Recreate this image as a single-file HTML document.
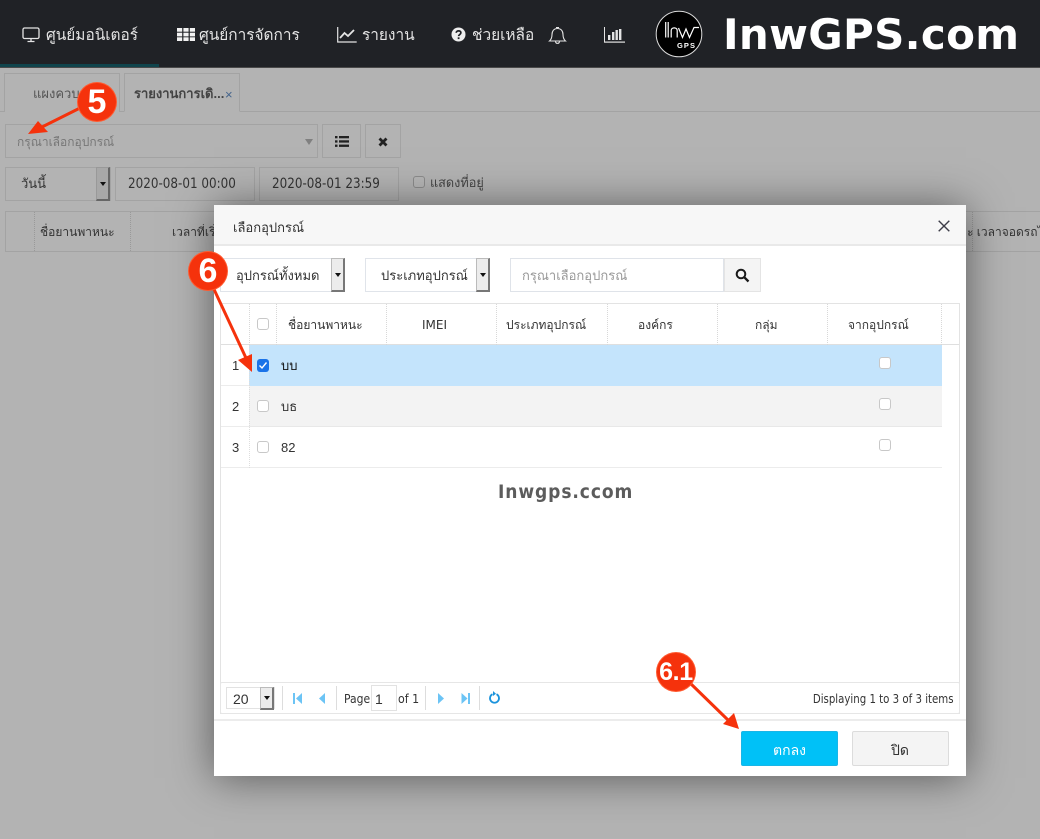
<!DOCTYPE html>
<html><head><meta charset="utf-8">
<style>
*{box-sizing:border-box}
html,body{margin:0;padding:0;width:1040px;height:839px;overflow:hidden;background:#b3b3b3;font-family:"Liberation Sans","Noto Sans CJK SC",sans-serif;font-size:12px;color:#333}
.a{position:absolute}
.t{position:absolute;white-space:nowrap;line-height:16px}
.nav{color:#e4e4e4;font-size:15.4px;top:28px}
.bx{position:absolute;border:1px solid #a3a3a3;background:#b3b3b3}
.cb{position:absolute;width:12px;height:12px;border:1px solid #c8c8c8;border-radius:3px;background:#fff}
.dv{position:absolute;top:304px;height:41px;border-left:1px dotted #d8d8d8}
.dd{position:absolute;width:14px;background:#ececec;border:1px solid #bbb;border-right:2px solid #777;border-bottom:2px solid #777}
.dd:after{content:"";position:absolute;left:3px;top:14px;border:3px solid transparent;border-top:4px solid #111}
.dd.s:after{top:8px}
.sep{position:absolute;top:686px;height:24px;border-left:1px solid #ddd}
.circ{position:absolute;border-radius:50%;background:#f5320c;color:#fff;font-weight:bold;text-align:center;box-shadow:0 0 0 1px #ff5a30}
</style></head><body>

<!-- nav -->
<div class="a" style="left:0;top:0;width:1040px;height:68px;background:#202226;border-bottom:1px solid #4a4a4a"></div>
<div class="a" style="left:0;top:64px;width:159px;height:3px;background:#10444c"></div>
<svg class="a" style="left:22px;top:27px" width="18" height="16" viewBox="0 0 18 16" fill="none" stroke="#e4e4e4" stroke-width="1.3"><rect x="1" y="1" width="16" height="10.5" rx="1.5"/><path d="M9 12v2.5M5.5 14.500h7"/></svg>
<div class="t nav" style="left:46px">ศูนย์มอนิเตอร์</div>
<svg class="a" style="left:177px;top:28px" width="18" height="13" viewBox="0 0 18 13" fill="#f2f2f2"><rect width="5.200" height="3.700"/><rect x="6.400" width="5.200" height="3.700"/><rect x="12.800" width="5.200" height="3.700"/><rect y="4.700" width="5.200" height="3.700"/><rect x="6.400" y="4.700" width="5.200" height="3.700"/><rect x="12.800" y="4.700" width="5.200" height="3.700"/><rect y="9.300" width="5.200" height="3.700"/><rect x="6.400" y="9.300" width="5.200" height="3.700"/><rect x="12.800" y="9.300" width="5.200" height="3.700"/></svg>
<div class="t nav" style="left:199px">ศูนย์การจัดการ</div>
<svg class="a" style="left:337px;top:27px" width="20" height="16" viewBox="0 0 20 16" fill="none" stroke="#e4e4e4"><path d="M.7 0v15h19" stroke-width="1.2"/><path d="M3 11l4.500-5 3.500 3 6-6" stroke-width="1.800"/></svg>
<div class="t nav" style="left:362px">รายงาน</div>
<svg class="a" style="left:451px;top:27px" width="15" height="15" viewBox="0 0 15 15"><circle cx="7.500" cy="7.500" r="7" fill="#eee"/><path d="M5.200 5.800c.2-2.600 4.700-2.600 4.700 0 0 1.700-2.300 1.700-2.300 3.300" fill="none" stroke="#202226" stroke-width="1.700"/><rect x="6.700" y="10.300" width="1.800" height="1.800" fill="#202226"/></svg>
<div class="t nav" style="left:472px">ช่วยเหลือ</div>
<svg class="a" style="left:548px;top:26px" width="19" height="19" viewBox="0 0 19 19" fill="none" stroke="#e4e4e4" stroke-width="1.100"><path d="M1.500 15c2-1.800 2.500-3.500 2.500-6.500C4 5 6 2.500 9.500 2.500S15 5 15 8.500c0 3 .5 4.700 2.500 6.500z"/><path d="M8 1.500h3M7.500 15.500c.3 2.500 3.700 2.500 4 0"/></svg>
<svg class="a" style="left:604px;top:27px" width="21" height="16" viewBox="0 0 21 16" fill="#e4e4e4"><rect x="0" y="0" width="1" height="15"/><rect x="0" y="14.500" width="21" height="1.200"/><rect x="4" y="8" width="2.400" height="5"/><rect x="8" y="5" width="2.400" height="8"/><rect x="11.500" y="3" width="2.400" height="10"/><rect x="15" y="2" width="2.400" height="11"/></svg>

<!-- logo -->
<svg class="a" style="left:655px;top:10px" width="48" height="48" viewBox="0 0 48 48">
<circle cx="24" cy="24" r="22.800" fill="#000" stroke="#ddd" stroke-width="1"/>
<path d="M10.700 12v15.500M13.200 12v15.500M16.200 27.500V20.500c0-3.500 6-3.500 6 0v7" fill="none" stroke="#fff" stroke-width="1.200"/>
<path d="M23.500 18l4 9.500 3.500-8.500 3.500 8.500 4.500-10h5" fill="none" stroke="#fff" stroke-width="1.200"/>
<text x="22" y="38" font-family="Liberation Sans" font-size="7.500" font-weight="bold" fill="#fff" textLength="18">GPS</text>
</svg>
<div class="t" style="left:723px;top:11px;font-size:42px;line-height:48px;font-weight:bold;color:#fff;letter-spacing:.3px;font-family:'DejaVu Sans',sans-serif">InwGPS.com</div>

<!-- tabs -->
<div class="a" style="left:0;top:111px;width:1040px;height:1px;background:#a3a3a3"></div>
<div class="bx" style="left:4px;top:73px;width:116px;height:39px;border-bottom:none"></div>
<div class="bx" style="left:124px;top:73px;width:116px;height:39px;border-bottom:1px solid #b3b3b3"></div>
<div class="t" style="left:33px;top:86px;color:#555;font-size:13px">แผงควบคุม</div>
<div class="t" style="left:134px;top:86px;color:#444;font-weight:bold;font-size:13px">รายงานการเดิ...</div>
<div class="t" style="left:225px;top:87px;color:#44648c;font-size:13px">×</div>

<!-- toolbar -->
<div class="bx" style="left:5px;top:124px;width:313px;height:34px"></div>
<div class="t" style="left:17px;top:134px;color:#777">กรุณาเลือกอุปกรณ์</div>
<div class="a" style="left:305px;top:139px;border:4px solid transparent;border-top:6px solid #808080"></div>
<div class="bx" style="left:322px;top:124px;width:39px;height:34px"></div>
<svg class="a" style="left:335px;top:136px" width="14" height="11" viewBox="0 0 14 11" fill="#222"><rect width="2.500" height="2.300"/><rect x="4" width="10" height="2.300"/><rect y="4.300" width="2.500" height="2.300"/><rect x="4" y="4.300" width="10" height="2.300"/><rect y="8.600" width="2.500" height="2.300"/><rect x="4" y="8.600" width="10" height="2.300"/></svg>
<div class="bx" style="left:365px;top:124px;width:36px;height:34px"></div>
<svg class="a" style="left:378px;top:137px" width="10" height="10" viewBox="0 0 10 10"><path d="M1.500 1.500l7 7M8.500 1.500l-7 7" stroke="#222" stroke-width="2.800"/></svg>

<div class="bx" style="left:5px;top:167px;width:106px;height:34px"></div>
<div class="t" style="left:21px;top:176px;color:#333;font-size:13px">วันนี้</div>
<div class="dd" style="left:96px;top:167px;height:34px;background:#a8a8a8;border-color:#999 #666 #666 #999"></div>
<div class="bx" style="left:115px;top:167px;width:140px;height:34px"></div>
<div class="t" style="left:128px;top:176px;font-size:14px;color:#333;font-family:'DejaVu Sans',sans-serif;transform-origin:0 0;transform:scaleX(.855)">2020-08-01 00:00</div>
<div class="bx" style="left:259px;top:167px;width:140px;height:34px"></div>
<div class="t" style="left:272px;top:176px;font-size:14px;color:#333;font-family:'DejaVu Sans',sans-serif;transform-origin:0 0;transform:scaleX(.855)">2020-08-01 23:59</div>
<div class="a" style="left:413px;top:176px;width:12px;height:12px;border:1px solid #8c8c8c;border-radius:3px;background:#b6b6b6"></div>
<div class="t" style="left:430px;top:175px;color:#444;font-size:12.700px">แสดงที่อยู่</div>

<!-- bg table header -->
<div class="a" style="left:5px;top:211px;width:1035px;height:41px;border:1px solid #a3a3a3;border-right:none"></div>
<div class="a" style="left:34px;top:212px;height:39px;border-left:1px dotted #999"></div>
<div class="a" style="left:130px;top:212px;height:39px;border-left:1px dotted #999"></div>
<div class="t" style="left:40px;top:224px;color:#333">ชื่อยานพาหนะ</div>
<div class="t" style="left:172px;top:224px;width:42px;overflow:hidden;color:#333">เวลาที่เริ่ม</div>
<div class="a" style="left:972px;top:212px;height:39px;border-left:1px dotted #999"></div>
<div class="t" style="left:967px;top:224px;width:73px;overflow:hidden;color:#333">ะ เวลาจอดรถไ</div>

<!-- modal -->
<div class="a" style="left:214px;top:205px;width:752px;height:571px;background:#fff;box-shadow:0 2px 40px rgba(0,0,0,.5)"></div>
<div class="a" style="left:214px;top:205px;width:752px;height:41px;background:#f7f7f7;border-bottom:2px solid #e9e9e9"></div>
<div class="t" style="left:233px;top:220px;font-size:13px;color:#333">เลือกอุปกรณ์</div>
<svg class="a" style="left:938px;top:220px" width="12" height="12" viewBox="0 0 12 12"><path d="M.7.7l10.600 10.600M11.300.7L.7 11.300" stroke="#3d3d48" stroke-width="1.400"/></svg>

<div class="a" style="left:220px;top:258px;width:125px;height:34px;border:1px solid #e0e4ea;background:#fff"></div>
<div class="t" style="left:236px;top:268px;font-size:13px;color:#333">อุปกรณ์ทั้งหมด</div>
<div class="dd" style="left:331px;top:258px;height:34px"></div>
<div class="a" style="left:365px;top:258px;width:125px;height:34px;border:1px solid #e0e4ea;background:#fff"></div>
<div class="t" style="left:381px;top:268px;font-size:13px;color:#333">ประเภทอุปกรณ์</div>
<div class="dd" style="left:476px;top:258px;height:34px"></div>
<div class="a" style="left:510px;top:258px;width:214px;height:34px;border:1px solid #dfe3e9;background:#fff"></div>
<div class="t" style="left:522px;top:268px;font-size:13px;color:#999">กรุณาเลือกอุปกรณ์</div>
<div class="a" style="left:724px;top:258px;width:37px;height:34px;border:1px solid #e4e4e4;background:#f4f4f4"></div>
<svg class="a" style="left:735px;top:268px" width="15" height="15" viewBox="0 0 15 15" fill="none" stroke="#1a1a1a" stroke-width="2"><circle cx="6" cy="6" r="4.300"/><path d="M9.200 9.200l4.300 4.300" stroke-width="2.300"/></svg>

<!-- grid -->
<div class="a" style="left:220px;top:303px;width:740px;height:411px;border:1px solid #e3e3e3"></div>
<div class="a" style="left:221px;top:344px;width:738px;height:1px;background:#dfdfdf"></div>
<div class="dv" style="left:249px"></div><div class="dv" style="left:276px"></div><div class="dv" style="left:386px"></div><div class="dv" style="left:496px"></div><div class="dv" style="left:607px"></div><div class="dv" style="left:717px"></div><div class="dv" style="left:827px"></div><div class="dv" style="left:941px"></div>
<div class="cb" style="left:257px;top:318px"></div>
<div class="t" style="left:288px;top:317px;color:#333">ชื่อยานพาหนะ</div>
<div class="t" style="left:422px;top:317px;color:#333;font-family:'DejaVu Sans',sans-serif;font-size:12px">IMEI</div>
<div class="t" style="left:506px;top:317px;color:#333">ประเภทอุปกรณ์</div>
<div class="t" style="left:638px;top:317px;color:#333">องค์กร</div>
<div class="t" style="left:755px;top:317px;color:#333">กลุ่ม</div>
<div class="t" style="left:848px;top:317px;color:#333">จากอุปกรณ์</div>

<div class="a" style="left:249px;top:345px;width:693px;height:41px;background:#c4e4fc"></div>
<div class="a" style="left:249px;top:386px;width:693px;height:41px;background:#f3f3f3;border-bottom:1px solid #e8e8e8"></div>
<div class="a" style="left:221px;top:467px;width:721px;height:1px;background:#ececec"></div>
<div class="a" style="left:249px;top:345px;height:123px;border-left:1px dotted #ddd"></div>
<div class="a" style="left:221px;top:385px;width:28px;height:1px;background:#ececec"></div>
<div class="a" style="left:221px;top:426px;width:28px;height:1px;background:#ececec"></div>

<div class="t" style="left:232px;top:358px;font-size:13px">1</div>
<div class="t" style="left:232px;top:399px;font-size:13px">2</div>
<div class="t" style="left:232px;top:440px;font-size:13px">3</div>
<div class="a" style="left:257px;top:359px;width:12px;height:13px;background:#1a73e8;border-radius:3px"></div>
<svg class="a" style="left:258px;top:361px" width="10" height="9" viewBox="0 0 10 9"><path d="M1.500 4.500l2.500 2.500 4.500-5.500" fill="none" stroke="#fff" stroke-width="1.400"/></svg>
<div class="cb" style="left:257px;top:400px"></div>
<div class="cb" style="left:257px;top:441px"></div>
<div class="t" style="left:281px;top:358px;color:#111;font-size:13px">บบ</div>
<div class="t" style="left:281px;top:399px;color:#333;font-size:13px">บธ</div>
<div class="t" style="left:281px;top:440px;color:#333;font-size:13px">82</div>
<div class="cb" style="left:879px;top:357px"></div>
<div class="cb" style="left:879px;top:398px"></div>
<div class="cb" style="left:879px;top:439px"></div>

<div class="t" style="left:498px;top:481px;font-size:19px;line-height:22px;font-weight:bold;color:#5c5c5c;letter-spacing:1px;font-family:'DejaVu Sans',sans-serif;transform-origin:0 0;transform:scaleX(.9)">Inwgps.ccom</div>

<!-- pager -->
<div class="a" style="left:220px;top:682px;width:740px;height:32px;border:1px solid #e6e6e6;background:#fff;border-radius:2px"></div>
<div class="a" style="left:226px;top:687px;width:49px;height:22px;border:1px solid #e2e2e2;background:#fff"></div>
<div class="t" style="left:233px;top:691px;font-size:14px">20</div>
<div class="dd s" style="left:260px;top:687px;height:23px"></div>
<div class="sep" style="left:282px"></div><div class="sep" style="left:336px"></div><div class="sep" style="left:425px"></div><div class="sep" style="left:479px"></div>
<svg class="a" style="left:292px;top:692px" width="12" height="13" viewBox="0 0 12 13" fill="#6cc4f5"><rect x="1" y="1" width="2" height="11"/><path d="M10 1v11L4 6.500z"/></svg>
<svg class="a" style="left:317px;top:692px" width="10" height="13" viewBox="0 0 10 13" fill="#6cc4f5"><path d="M8 1v11L2 6.500z"/></svg>
<div class="t" style="left:344px;top:691px;font-size:12px;color:#333;font-family:'DejaVu Sans',sans-serif;transform-origin:0 0;transform:scaleX(.9)">Page</div>
<div class="a" style="left:371px;top:685px;width:26px;height:26px;border:1px solid #e2e2e2;background:#fff"></div>
<div class="t" style="left:375px;top:691px;font-size:14px">1</div>
<div class="t" style="left:398px;top:691px;font-size:12px;color:#333;font-family:'DejaVu Sans',sans-serif;transform-origin:0 0;transform:scaleX(.92)">of 1</div>
<svg class="a" style="left:436px;top:692px" width="10" height="13" viewBox="0 0 10 13" fill="#6cc4f5"><path d="M2 1v11l6-5.500z"/></svg>
<svg class="a" style="left:460px;top:692px" width="12" height="13" viewBox="0 0 12 13" fill="#6cc4f5"><path d="M1.500 1v11l6-5.500z"/><rect x="8" y="1" width="2" height="11"/></svg>
<svg class="a" style="left:488px;top:691px" width="13" height="14" viewBox="0 0 13 14" fill="none"><path d="M8.500 3.200a4.500 4.500 0 1 1-4 0" stroke="#1b93dc" stroke-width="1.800"/><path d="M5 0v5l3-2.200z" fill="#1b93dc"/></svg>
<div class="t" style="right:86px;top:691px;font-size:12px;color:#333;font-family:'DejaVu Sans',sans-serif;transform-origin:100% 0;transform:scaleX(.85)">Displaying 1 to 3 of 3 items</div>

<!-- footer -->
<div class="a" style="left:214px;top:719px;width:752px;height:2px;background:#ececec"></div>
<div class="a" style="left:741px;top:731px;width:97px;height:35px;background:#00c1f7;border:1px solid #19b5e6;border-radius:2px"></div>
<div class="t" style="left:773px;top:742px;color:#fff;font-size:14px">ตกลง</div>
<div class="a" style="left:852px;top:731px;width:97px;height:35px;background:#f4f4f4;border:1px solid #dcdcdc;border-radius:2px"></div>
<div class="t" style="left:891px;top:742px;color:#333;font-size:14px">ปิด</div>

<!-- annotations -->
<svg class="a" style="left:0;top:0" width="1040" height="839" viewBox="0 0 1040 839">
<path d="M84 106L42 127" stroke="#f5320c" stroke-width="3"/><path d="M28 134L38 121 48 132z" fill="#f5320c"/>
<path d="M212 285L246 358" stroke="#f5320c" stroke-width="3"/><path d="M252 372L238 360 252 354z" fill="#f5320c"/>
<path d="M689 682L728 720" stroke="#f5320c" stroke-width="3"/><path d="M739 729L723 724 734 713z" fill="#f5320c"/>
</svg>
<div class="circ" style="left:78px;top:83px;width:38px;height:38px;font-size:34px;line-height:38px">5</div>
<div class="circ" style="left:189px;top:252px;width:38px;height:38px;font-size:34px;line-height:38px">6</div>
<div class="circ" style="left:657px;top:653px;width:38px;height:38px;font-size:25px;line-height:38px;letter-spacing:-.3px">6.1</div>
</body></html>
